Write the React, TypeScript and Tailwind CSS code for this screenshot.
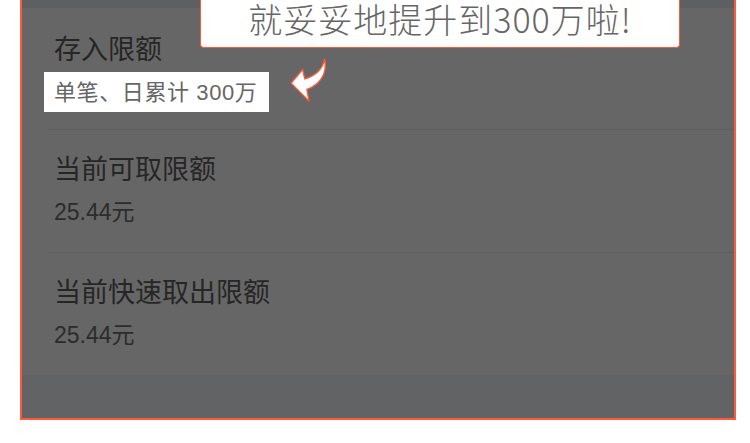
import React from "react";

const sans = "font-['Liberation_Sans','Noto_Sans_CJK_SC',sans-serif]";

function LimitRow({ title, value }: { title: string; value: string }) {
  return (
    <div className="flex h-[122px] flex-col justify-center gap-[12px] pl-[32px]">
      <div className={`${sans} text-[27px] leading-[30px] text-[#262626]`}>{title}</div>
      <div className={`${sans} text-[23px] leading-[30px] text-[#2c2c2c]`}>{value}</div>
    </div>
  );
}

export default function App() {
  return (
    <div className="relative h-[443px] w-[750px] overflow-hidden bg-white">
      <div className="ml-[20px] flex h-[420px] w-[716px] flex-col border-2 border-t-0 border-[#ff5a3c] bg-[#666666]">
        <div className="h-[8px] bg-[#5e5f61]" />
        {/* deposit limit */}
        <div className="flex h-[121px] flex-col pl-[32px] pt-[27px]">
          <div className={`${sans} text-[27px] leading-[30px] text-[#262626]`}>存入限额</div>
          <div className="mt-[7px] -ml-[10px] flex h-[40px] w-fit items-center bg-white pl-[10px] pr-[12px]">
            <span className={`${sans} text-[22px] tracking-[0.6px] text-[#666666]`}>单笔、日累计 300万</span>
          </div>
        </div>
        <div className="ml-[26px] h-px bg-[#5e5e5e]" />
        <LimitRow title="当前可取限额" value="25.44元" />
        <div className="ml-[26px] h-px bg-[#5e5e5e]" />
        <LimitRow title="当前快速取出限额" value="25.44元" />
        <div className="flex-1 bg-[#626365]" />
      </div>

      {/* annotation callout */}
      <div className="absolute left-[200px] top-[-1px] flex h-[49px] w-[480px] justify-center rounded-b-[4px] border-[1.5px] border-t-0 border-[#ff5a3c] bg-white pt-[1px]">
        <span className="font-['Noto_Sans_CJK_SC',sans-serif] text-[34px] font-light leading-[38px] tracking-[1px] text-[#666666]">
          就妥妥地提升到300万啦!
        </span>
      </div>

      {/* curved arrow */}
      <svg className="absolute left-[289px] top-[57px]" width="42" height="46" viewBox="0 0 40 44">
        <path
          d="M34 2 C37 16 29 27 17 31 L19 42 L2 25 L13 12 L15 21 C25 18 32 12 34 2 Z"
          fill="#ffffff"
          stroke="#ff5a3c"
          strokeWidth="1.3"
          strokeLinejoin="round"
        />
      </svg>
    </div>
  );
}
